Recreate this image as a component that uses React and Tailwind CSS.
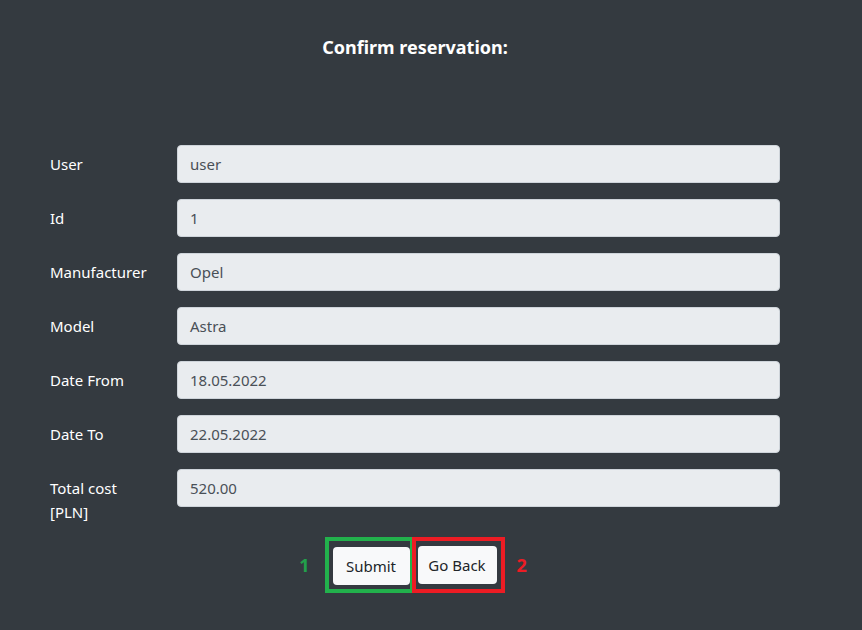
import React from "react";

const rows = [
  ["User", "user"],
  ["Id", "1"],
  ["Manufacturer", "Opel"],
  ["Model", "Astra"],
  ["Date From", "18.05.2022"],
  ["Date To", "22.05.2022"],
  ["Total cost [PLN]", "520.00"],
];

export default function App() {
  return (
    <div
      className="w-[862px] h-[630px] bg-[#343a40] text-white overflow-hidden"
      style={{ fontFamily: '"Noto Sans", "Open Sans", sans-serif' }}
    >
      <div className="ml-[50px] w-[730px] pt-[34px]">
        <h5 className="text-center text-[18px] leading-[26px] font-bold">Confirm reservation:</h5>
        <div className="mt-[85px] flex flex-col gap-4">
          {rows.map(([label, value]) => (
            <div key={label} className="flex items-start">
              <div className="w-[127px] pr-[24px] pt-[7px] text-[15px] leading-[24px]">{label}</div>
              <div className="flex-1 h-[38px] rounded-[4px] border border-[#ced4da] bg-[#e9ecef] px-[12px] flex items-center text-[15px] text-[#495057]">
                {value}
              </div>
            </div>
          ))}
        </div>
        <div className="mt-[13px] pr-[4px] flex justify-center items-center">
          <span className="text-[18px] font-bold text-[#22a04b] mr-[15px]">1</span>
          <div className="border-[4px] border-[#22b14c] pl-[4px] pt-[6px] pb-[4px] pr-[0px]">
            <button className="h-[38px] w-[77px] rounded-[4px] bg-[#f8f9fa] text-[#212529] text-[15px]">Submit</button>
          </div>
          <div className="border-[4px] border-[#ed1c24] pt-[5px] pb-[5px] pl-[2px] pr-[4px] -ml-[2px]">
            <button className="h-[38px] w-[79px] rounded-[4px] bg-[#f8f9fa] text-[#212529] text-[15px]">Go Back</button>
          </div>
          <span className="text-[18px] font-bold text-[#ed1c24] ml-[12px]">2</span>
        </div>
      </div>
    </div>
  );
}
